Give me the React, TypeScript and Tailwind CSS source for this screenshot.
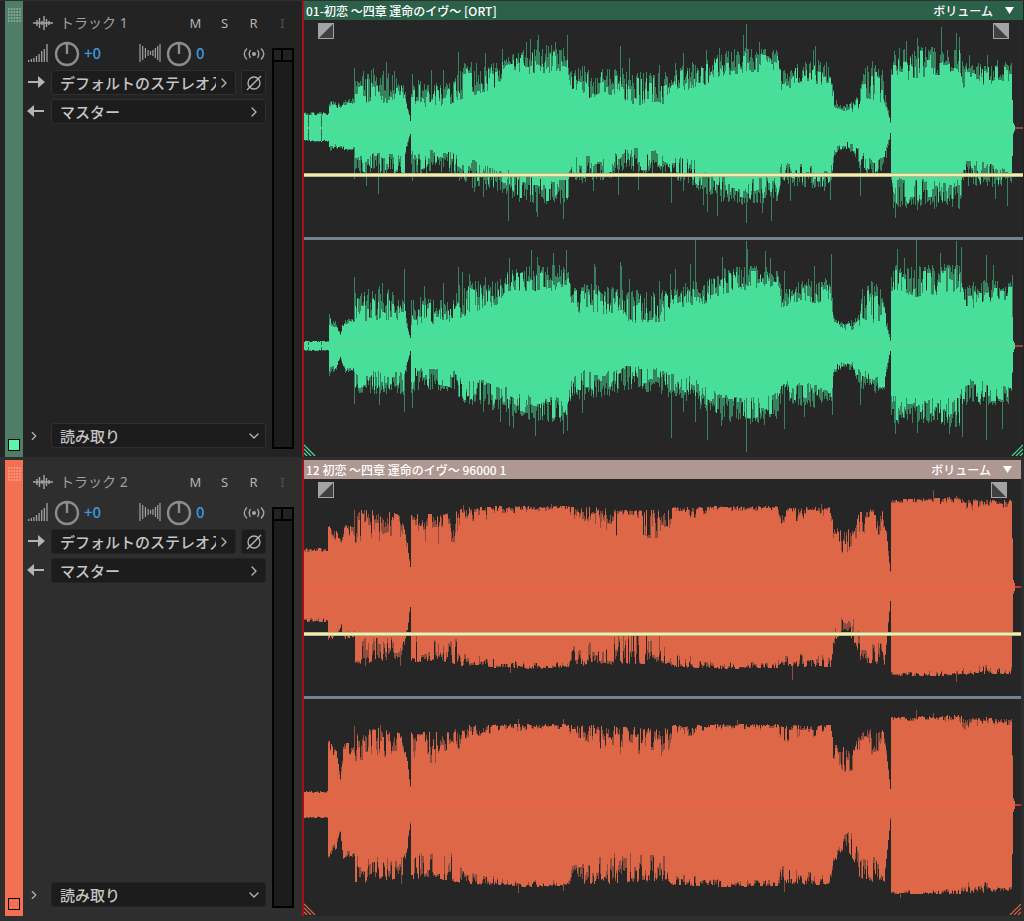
import { ChevronRight, ChevronDown } from 'lucide-react';

// [x, body, peak] measured from the centre line of a channel
type Point = [number, number, number];
// [x, amplitude], positive goes up, negative goes down
type Spike = [number, number];

interface ChannelData {
    seed: number;
    center: number;
    dense: boolean;
    up: Point[];
    down: Point[];
    spikes: Spike[];
}

interface Track {
    name: string;
    clip: string;
    number: number;
    panel: string;
    strip: string;
    marker: string;
    header: string;
    box: string;
    clipMargin: string;
    wave: string;
    peak: string;
    axis: string;
    width: number;
    channels: ChannelData[];
}

const quietIntro: Point[] = [[0, 4, 5], [24, 4, 5], [25, 20, 30], [32, 18, 24], [36, 10, 12], [39, 20, 27], [50, 22, 28]];

const greenUp: Point[] = [
    [51, 28, 54], [62, 24, 60], [75, 26, 60], [90, 24, 58], [100, 30, 44], [103, 18, 24], [106, 7, 8], [107, 18, 52],
    [112, 20, 50], [135, 22, 46], [150, 24, 48], [157, 28, 66], [166, 32, 66], [180, 36, 64], [195, 42, 67],
    [202, 54, 76], [215, 54, 78], [240, 54, 84], [263, 58, 80], [267, 38, 57], [280, 28, 64], [300, 32, 60],
    [318, 34, 60], [322, 23, 56], [345, 22, 56], [362, 24, 58], [368, 38, 57], [385, 38, 66], [400, 42, 68],
    [420, 52, 78], [445, 56, 81], [473, 54, 78], [477, 38, 58], [500, 42, 68], [526, 44, 68], [530, 20, 29],
    [540, 15, 23], [550, 16, 28], [555, 20, 38], [558, 28, 58], [567, 22, 66], [578, 26, 58], [583, 15, 24],
    [586, 5, 6], [587, 52, 80], [603, 48, 84], [620, 50, 82], [640, 52, 82], [655, 56, 84], [659, 38, 66],
    [670, 38, 64], [690, 44, 68], [707, 46, 66], [708, 26, 30], [709, 5, 6], [711, 1, 1],
];
const greenDown: Point[] = [
    [51, 28, 48], [75, 24, 48], [100, 26, 50], [103, 14, 18], [106, 5, 7], [107, 22, 50], [125, 22, 46],
    [150, 24, 48], [157, 30, 58], [180, 34, 62], [200, 40, 66], [215, 48, 74], [240, 50, 78], [263, 52, 76],
    [267, 32, 50], [280, 24, 56], [300, 26, 52], [322, 20, 46], [350, 20, 46], [366, 28, 52], [385, 30, 56],
    [400, 36, 66], [420, 48, 76], [445, 52, 78], [473, 46, 74], [477, 34, 54], [500, 36, 62], [526, 42, 64],
    [530, 20, 28], [540, 13, 22], [550, 15, 28], [556, 22, 44], [570, 30, 48], [580, 26, 46], [583, 16, 24],
    [586, 5, 6], [587, 48, 80], [603, 52, 80], [620, 50, 78], [655, 52, 82], [659, 32, 60], [680, 34, 60],
    [707, 42, 58], [708, 26, 30], [709, 5, 6], [711, 1, 1],
];

const orangeUp: Point[] = [
    [51, 42, 77], [75, 44, 77], [97, 50, 72], [103, 36, 44], [106, 18, 20], [107, 38, 73], [135, 38, 73],
    [155, 44, 77], [158, 66, 80], [175, 64, 80], [195, 73, 81], [225, 74, 81], [263, 76, 81], [268, 66, 80],
    [300, 54, 80], [322, 48, 78], [350, 46, 77], [364, 52, 78], [367, 66, 80], [390, 68, 80], [420, 75, 81],
    [473, 75, 81], [477, 62, 79], [500, 66, 80], [526, 72, 80], [529, 45, 62], [540, 32, 58], [550, 32, 58],
    [555, 54, 76], [565, 48, 78], [580, 54, 76], [583, 36, 48], [586, 14, 16], [587, 84, 88], [655, 83, 90],
    [660, 75, 88], [680, 80, 88], [690, 77, 87], [707, 79, 87], [708, 48, 50], [709, 6, 7], [711, 1, 1],
];
const orangeDown: Point[] = [
    [51, 46, 77], [75, 50, 75], [97, 50, 75], [103, 34, 44], [106, 16, 20], [107, 46, 75], [135, 46, 74],
    [155, 50, 78], [158, 66, 79], [175, 68, 80], [200, 73, 81], [225, 75, 82], [263, 75, 81], [268, 60, 79],
    [300, 50, 79], [322, 46, 78], [350, 46, 77], [364, 52, 77], [367, 66, 80], [390, 70, 81], [420, 75, 82],
    [473, 74, 81], [477, 60, 79], [500, 66, 80], [526, 68, 80], [529, 42, 60], [536, 28, 48], [545, 20, 48],
    [552, 36, 60], [556, 48, 77], [580, 54, 78], [583, 36, 48], [586, 13, 16], [587, 84, 89], [655, 84, 89],
    [662, 75, 88], [707, 79, 87], [708, 48, 50], [709, 6, 7], [711, 1, 1],
];

const tracks: Track[] = [
    {
        name: 'トラック 1',
        clip: '01-初恋 〜四章 運命のイヴ〜 [ORT]',
        number: 1,
        panel: 'bg-[#232323]',
        strip: 'bg-[#4f7d67]',
        marker: 'bg-[#5bf5ae]',
        header: 'bg-[#2b6149]',
        box: 'border-[#2f2f2f]',
        clipMargin: 'mr-px',
        wave: '#48df9a',
        peak: '#37835f',
        axis: '#58d894',
        width: 719,
        channels: [
            {
                seed: 11,
                center: 108,
                dense: false,
                up: [[0, 13, 16], [24, 13, 16], [25, 22, 30], [36, 18, 24], [40, 23, 28], [50, 24, 30], ...greenUp],
                down: [[0, 12, 14], [24, 12, 14], [25, 18, 24], [36, 15, 20], [40, 19, 23], [50, 19, 22], ...greenDown],
                spikes: [
                    [50, 60], [82, 66], [108, 54], [127, 58], [139, 58], [154, 76], [160, 65], [181, 75], [198, 79], [222, 86],
                    [226, 89], [233, 88], [234, 93], [242, 83], [251, 86], [263, 93], [316, 82], [325, 70], [355, 63], [371, 65],
                    [379, 75], [402, 78], [415, 80], [439, 93], [442, 104], [455, 86], [509, 78], [511, 82], [568, 67], [602, 87],
                    [613, 90], [637, 101], [652, 95], [655, 91], [665, 73], [683, 73], [50, -51], [62, -58], [74, -66], [108, -53],
                    [170, -64], [179, -69], [204, -93], [232, -84], [233, -89], [259, -91], [289, -63], [314, -67], [334, -62],
                    [367, -75], [379, -63], [399, -77], [403, -84], [413, -88], [442, -95], [458, -85], [467, -93], [486, -73],
                    [526, -72], [556, -68], [589, -80], [591, -90], [613, -82], [630, -81], [655, -81], [691, -71], [703, -78],
                ],
            },
            {
                seed: 23,
                center: 106,
                dense: false,
                up: [...quietIntro, ...greenUp],
                down: [...quietIntro, ...greenDown],
                spikes: [
                    [25, 32], [50, 69], [78, 63], [100, 77], [120, 60], [139, 63], [154, 79], [158, 74], [165, 72], [181, 69],
                    [205, 88], [227, 96], [233, 89], [249, 93], [262, 96], [290, 82], [291, 79], [316, 84], [317, 80], [325, 67],
                    [355, 65], [366, 72], [371, 77], [386, 82], [391, 106], [418, 89], [442, 105], [443, 97], [461, 95], [466, 88],
                    [480, 75], [510, 80], [527, 92], [568, 64], [593, 97], [600, 88], [612, 106], [636, 93], [652, 105], [657, 99],
                    [682, 91], [689, 81], [708, 71], [50, -58], [75, -59], [100, -66], [108, -62], [179, -66], [196, -76],
                    [205, -80], [209, -82], [231, -90], [259, -88], [263, -85], [278, -67], [367, -92], [379, -66], [391, -76],
                    [403, -94], [417, -80], [442, -106], [460, -79], [480, -83], [500, -71], [528, -69], [556, -59], [591, -88],
                    [613, -87], [645, -88], [658, -91], [682, -94], [698, -83],
                ],
            },
        ],
    },
    {
        name: 'トラック 2',
        clip: '12 初恋 〜四章 運命のイヴ〜 96000 1',
        number: 2,
        panel: 'bg-[#2e2e2e]',
        strip: 'bg-[#f37053]',
        marker: 'bg-[#f37053]',
        header: 'bg-[#af9891]',
        box: 'border-[#242424]',
        clipMargin: 'mr-[3px]',
        wave: '#de6747',
        peak: '#8f4e3d',
        axis: '#ea6142',
        width: 717,
        channels: [
            {
                seed: 37,
                center: 108,
                dense: true,
                up: [[0, 35, 39], [23, 35, 39], [24, 54, 62], [32, 46, 56], [37, 42, 48], [40, 50, 62], [50, 50, 62], ...orangeUp],
                down: [[0, 31, 35], [23, 31, 35], [24, 46, 54], [37, 36, 46], [40, 46, 52], [50, 40, 50], ...orangeDown],
                spikes: [[50, 77], [60, 77], [159, 82], [247, 83], [517, 83], [629, 97], [652, 91], [61, -79], [96, -79], [206, -86], [488, -93], [652, -95]],
            },
            {
                seed: 53,
                center: 106,
                dense: true,
                up: [[0, 12, 14], [23, 12, 14], [24, 48, 66], [32, 42, 54], [36, 25, 28], [39, 48, 62], [50, 50, 62], ...orangeUp],
                down: [[0, 11, 13], [23, 11, 13], [24, 44, 54], [32, 36, 44], [36, 24, 28], [39, 44, 54], [50, 44, 54], ...orangeDown],
                spikes: [[50, 79], [76, 80], [214, 86], [259, 86], [433, 85], [612, 95], [629, 92], [61, -78], [97, -79], [214, -88], [259, -86], [480, -87], [596, -93]],
            },
        ],
    },
];

const createRandom = (seed: number) => {
    let state = seed * 7919;
    return () => {
        state = (state * 1103515245 + 12345) % 2147483648;
        return state / 2147483648;
    };
};

const sample = (points: Point[], x: number) => {
    const next = points.findIndex(point => point[0] >= x);
    if (next <= 0) return next === 0 ? [points[0][1], points[0][2]] : [0, 0];
    const a = points[next - 1];
    const b = points[next];
    const t = (x - a[0]) / (b[0] - a[0]);
    return [a[1] + (b[1] - a[1]) * t, a[2] + (b[2] - a[2]) * t];
};

const buildSide = (points: Point[], spikes: Spike[], sign: number, random: () => number, dense: boolean) => {
    const body: number[] = [];
    const peak: number[] = [];
    let held = random();
    for (let x = 0; x < 712; x++) {
        const [low, high] = sample(points, x);
        // neighbouring columns share a level so that the edge comes out in short steps
        if (random() > 0.35) held = random();
        const range = high - low;
        const level = dense ? 1 - Math.pow(held, 1.5) : Math.pow(held, 1.5) * 0.85;
        const solid = low + range * level;
        const reach = (high - solid) * (dense ? random() * 0.8 : Math.pow(random(), 1.2));
        body.push(solid);
        peak.push(solid + reach);
    }
    spikes.filter(spike => spike[1] * sign > 0).forEach(([x, amplitude]) => {
        peak[x] = Math.abs(amplitude);
    });
    return { body, peak };
};

const toPath = (up: number[], down: number[], center: number) => {
    const top = up.map((value, x) => `L${x} ${Math.round(center - value)}H${x + 1}`).join('');
    const bottom = down.map((value, x) => `L${x + 1} ${Math.round(center + value)}H${x}`).reverse().join('');
    return `M0 ${center}${top}L712 ${center}${bottom}Z`;
};

const Channel = ({ track, channel }: { track: Track; channel: ChannelData }) => {
    const random = createRandom(channel.seed);
    const up = buildSide(channel.up, channel.spikes, 1, random, channel.dense);
    const down = buildSide(channel.down, channel.spikes, -1, random, channel.dense);
    const gap = channel.up[0][1];

    return (
        <svg className="block w-full h-[217px]" viewBox={`0 0 ${track.width} 217`} preserveAspectRatio="none" aria-hidden="true">
            <path d={toPath(up.peak, down.peak, channel.center)} fill={track.peak} />
            <path d={toPath(up.body, down.body, channel.center)} fill={track.wave} />
            {!channel.dense && (
                <path
                    d={`M4.500 ${channel.center - gap}v${gap - 1}m0 2v${gap - 1}M17.500 ${channel.center - gap}v${gap - 1}m0 2v${gap - 1}`}
                    stroke="#2f6a51"
                />
            )}
            <path d={`M0 ${channel.center}H711`} stroke={track.axis} strokeWidth="2" />
            <path d={`M711 ${channel.center}h10`} stroke={channel.dense ? '#c93236' : '#94473b'} strokeWidth="2" />
        </svg>
    );
};

const FadeHandle = ({ side }: { side: 'left' | 'right' }) => (
    <button
        aria-label={side === 'left' ? 'フェードイン' : 'フェードアウト'}
        className={`absolute top-[3px] ${side === 'left' ? 'left-[14px]' : 'right-[14px]'}`}
    >
        <svg className="block" width="16" height="16" viewBox="0 0 16 16">
            <rect width="16" height="16" fill="#a3a3a3" />
            <path d={side === 'left' ? 'M15 1V15H1Z' : 'M1 1V15H15Z'} fill="#404040" />
            <rect x="0.5" y="0.5" width="15" height="15" fill="none" stroke="#a3a3a3" />
        </svg>
    </button>
);

const Corner = ({ side, color }: { side: 'left' | 'right'; color: string }) => (
    <svg
        className={`absolute bottom-px ${side === 'left' ? 'left-0' : 'right-0 -scale-x-100'}`}
        width="12"
        height="12"
        viewBox="0 0 12 12"
        aria-hidden="true"
    >
        <path d="M0 1L11 12M0 5L7 12M0 9L3 12" stroke={color} fill="none" strokeWidth="1.2" />
    </svg>
);

const Clip = ({ track }: { track: Track }) => (
    <div className={`flex-1 min-w-0 flex flex-col bg-[#262626] ${track.clipMargin}`}>
        <div className={`h-[19px] flex items-center justify-between pl-[2px] pr-[9px] font-['Noto_Sans_CJK_JP',sans-serif] text-[12px] leading-none font-medium text-white ${track.header}`}>
            <span className="whitespace-nowrap">{track.clip}</span>
            <button className="flex items-center gap-[12px] whitespace-nowrap">
                ボリューム
                <svg width="9" height="7" viewBox="0 0 9 7" aria-hidden="true">
                    <path d="M0 0H9L4.500 7Z" fill="#fff" />
                </svg>
            </button>
        </div>
        <div className="relative">
            <Channel track={track} channel={track.channels[0]} />
            <div className="absolute inset-x-0 top-[153px] h-[4px] border-y border-[#bdb98c] bg-[#f5eeab]" />
            <FadeHandle side="left" />
            <FadeHandle side="right" />
        </div>
        <div className="h-[3px] bg-[#73838d]" />
        <div className="relative">
            <Channel track={track} channel={track.channels[1]} />
            <Corner side="left" color={track.wave} />
            <Corner side="right" color={track.wave} />
        </div>
    </div>
);

const Knob = () => (
    <svg width="26" height="26" viewBox="0 0 26 26" aria-hidden="true">
        <circle cx="13" cy="13" r="11" fill="none" stroke="#8c8c8c" strokeWidth="2.400" />
        <path d="M13 3V13" stroke="#8c8c8c" strokeWidth="2.400" />
    </svg>
);

const ValueInput = ({ label, value }: { label: string; value: string }) => (
    <input
        aria-label={label}
        defaultValue={value}
        className="ml-1 pb-[2px] w-[46px] bg-transparent font-['Noto_Sans_CJK_JP',sans-serif] text-[15px] leading-[22px] font-medium text-[#3f97dd] outline-none"
    />
);

const WaveIcon = () => (
    <svg width="20" height="14" viewBox="0 0 20 14" aria-hidden="true">
        <path d="M0 7H20" stroke="#a6a6a6" strokeWidth="1.500" />
        <path d="M4 4V10M6.500 2V12M9 5V9M11 0V14M13.500 3V11M16 5V9" stroke="#a6a6a6" strokeWidth="1.400" />
    </svg>
);

const VolumeIcon = () => (
    <svg width="20" height="20" viewBox="0 0 20 20" aria-hidden="true">
        <path d="M.7 18V16M3.300 18V15M5.900 18V14M8.500 18V12M11.100 18V10M13.700 18V7M16.300 18V5M19 18V0" stroke="#a0a0a0" strokeWidth="1.300" />
    </svg>
);

const PanIcon = () => (
    <svg width="22" height="20" viewBox="0 0 22 20" aria-hidden="true">
        <path d="M1 0V18M3.700 2V16M6.400 4V14M9.100 6V12M11.500 7V11M13.900 6V12M16.400 4V14M18.700 2V16M21 0V18" stroke="#a0a0a0" strokeWidth="1.200" />
    </svg>
);

const MonoIcon = () => (
    <svg width="22" height="12" viewBox="0 0 22 12" aria-hidden="true">
        <circle cx="11" cy="6" r="2" fill="#a6a6a6" />
        <path d="M7.500 2Q5 6 7.500 10M4 .5Q-1.500 6 4 11.500M14.500 2Q17 6 14.500 10M18 .5Q23.500 6 18 11.500" fill="none" stroke="#a6a6a6" strokeWidth="1.400" />
    </svg>
);

const ArrowIcon = ({ back }: { back?: boolean }) => (
    <svg className={back ? '-scale-x-100' : ''} width="18" height="14" viewBox="0 0 18 14" aria-hidden="true">
        <path d="M1 5H11V0L18 6L11 12V7H1Z" fill="#b4b4b4" />
    </svg>
);

const Picker = ({ label, value, box, down }: { label: string; value: string; box: string; down?: boolean }) => {
    const Chevron = down ? ChevronDown : ChevronRight;

    return (
        <div className={`flex-1 min-w-0 h-[25px] flex items-center rounded-[3px] border bg-[#1c1c1c] pl-2 pr-[3px] ${box}`}>
            <select
                aria-label={label}
                className="appearance-none flex-1 min-w-0 h-[23px] bg-transparent text-[15px] leading-[22px] font-medium text-[#c4c4c4] outline-none"
            >
                <option>{value}</option>
            </select>
            <Chevron className="shrink-0 text-[#b4b4b4]" size={16} strokeWidth={2} />
        </div>
    );
};

const TrackControls = ({ track }: { track: Track }) => (
    <div className={`w-[279px] shrink-0 flex flex-col pt-[7px] ${track.panel}`}>
        <div className="flex items-center h-[30px] pl-[10px] pr-[5px]">
            <WaveIcon />
            <h2 className="ml-[7px] flex-1 text-[14px] leading-none text-[#a0a0a0]">{track.name}</h2>
            {['M', 'S', 'R', 'I'].map(name => (
                <button key={name} className={`w-[29px] text-[13px] leading-none ${name === 'I' ? 'text-[#505050]' : 'text-[#b4b4b4]'}`}>
                    {name}
                </button>
            ))}
        </div>

        <div className="flex-1 flex gap-[6px] pl-1 pr-2">
            <div className="flex-1 min-w-0 flex flex-col">
                <div className="flex items-center h-[32px] pl-px">
                    <VolumeIcon />
                    <div className="ml-[6px] flex items-center">
                        <Knob />
                        <ValueInput label="音量" value="+0" />
                    </div>
                    <div className="ml-[9px]"><PanIcon /></div>
                    <div className="ml-[5px] flex items-center">
                        <Knob />
                        <ValueInput label="パン" value="0" />
                    </div>
                    <button aria-label="モノラル" className="ml-px"><MonoIcon /></button>
                </div>
                <div className="flex items-center gap-[6px]">
                    <ArrowIcon />
                    <div className="flex-1 min-w-0 flex gap-[5px]">
                        <Picker label="入力" value="デフォルトのステレオ入力" box={track.box} />
                        <button aria-label="位相を反転" className={`w-[25px] h-[25px] flex items-center justify-center rounded-[3px] border bg-[#1c1c1c] ${track.box}`}>
                            <svg width="16" height="16" viewBox="0 0 16 16" aria-hidden="true">
                                <circle cx="8" cy="8" r="6" fill="none" stroke="#b4b4b4" strokeWidth="1.300" />
                                <path d="M1 15L15 1" stroke="#b4b4b4" strokeWidth="1.300" />
                            </svg>
                        </button>
                    </div>
                </div>
                <div className="mt-[4px] flex items-center gap-[6px]">
                    <ArrowIcon back />
                    <Picker label="出力" value="マスター" box={track.box} />
                </div>
                <div className="mt-auto mb-[9px] flex items-center gap-[10px]">
                    <button aria-label="展開">
                        <ChevronRight className="text-[#b4b4b4]" size={14} strokeWidth={2} />
                    </button>
                    <Picker label="オートメーションモード" value="読み取り" box={track.box} down />
                </div>
            </div>

            <div className="w-[22px] mt-[10px] mb-[8px] flex flex-col border-2 border-black bg-[#1c1c1c]">
                <div className="h-[12px] grid grid-cols-2 border-b-2 border-black bg-[#222]">
                    <div className="border-r-2 border-black" />
                </div>
            </div>
        </div>
    </div>
);

const TrackRow = ({ track }: { track: Track }) => (
    <section aria-label={track.name} className={`flex pl-[5px] ${track.panel}`}>
        <div className={`w-[18px] shrink-0 flex flex-col items-center justify-between py-[6px] ${track.strip}`}>
            <svg width="13" height="14" viewBox="0 0 13 14" className="mt-[1px]" aria-hidden="true">
                <path
                    d="M0 1H13M0 4H13M0 7H13M0 10H13M0 13H13"
                    stroke={track.number === 1 ? '#9bb8aa' : '#ffa593'}
                    strokeWidth="1.300"
                    strokeDasharray="1.600 1.200"
                />
            </svg>
            <div className={`size-[12px] border border-black ${track.marker}`} />
        </div>
        <TrackControls track={track} />
        <div className="w-[2px] shrink-0 bg-[#a3111b]" />
        <Clip track={track} />
    </section>
);

export default function App() {
    return (
        <main className="min-h-screen flex flex-col gap-[3px] bg-[#2e2e2e] pt-px font-['Noto_Sans','Noto_Sans_CJK_JP',sans-serif]">
            {tracks.map(track => (
                <TrackRow key={track.number} track={track} />
            ))}
        </main>
    );
}
